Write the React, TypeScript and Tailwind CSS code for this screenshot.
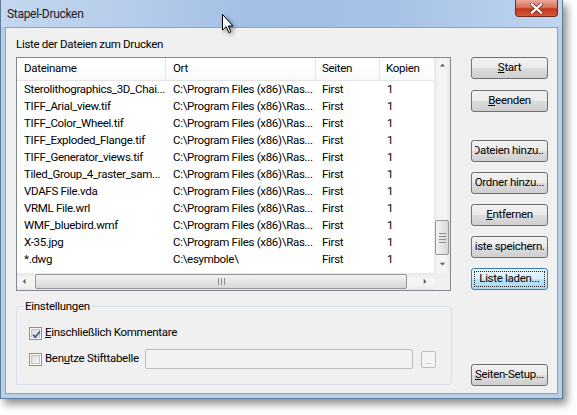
import React from 'react';

const rows: [string, string][] = [
  ['Sterolithographics_3D_Chai...', 'C:\\Program Files (x86)\\Ras...'],
  ['TIFF_Arial_view.tif', 'C:\\Program Files (x86)\\Ras...'],
  ['TIFF_Color_Wheel.tif', 'C:\\Program Files (x86)\\Ras...'],
  ['TIFF_Exploded_Flange.tif', 'C:\\Program Files (x86)\\Ras...'],
  ['TIFF_Generator_views.tif', 'C:\\Program Files (x86)\\Ras...'],
  ['Tiled_Group_4_raster_sam...', 'C:\\Program Files (x86)\\Ras...'],
  ['VDAFS File.vda', 'C:\\Program Files (x86)\\Ras...'],
  ['VRML File.wrl', 'C:\\Program Files (x86)\\Ras...'],
  ['WMF_bluebird.wmf', 'C:\\Program Files (x86)\\Ras...'],
  ['X-35.jpg', 'C:\\Program Files (x86)\\Ras...'],
  ['*.dwg', 'C:\\esymbole\\'],
];

// Win7 style push button
const Btn: React.FC<{ children: React.ReactNode; className?: string; focused?: boolean }> = ({
  children,
  className = '',
  focused,
}) => (
  <div
    className={`w-[77px] h-[22px] rounded-[3px] border p-[2px] ${
      focused
        ? 'border-[#3c7fb1] bg-[linear-gradient(#eaf6fd_0%,#d9f0fc_50%,#bee6fd_50%,#a7d9f5_100%)]'
        : 'border-[#707070] bg-[linear-gradient(#f2f2f2_0%,#ebebeb_50%,#dddddd_50%,#cfcfcf_100%)]'
    } ${className}`}
  >
    <div
      className={`w-full h-full flex items-center justify-center overflow-hidden whitespace-nowrap ${
        focused ? 'border border-dotted border-[#222]' : 'border border-transparent'
      }`}
    >
      {children}
    </div>
  </div>
);

const Checkbox: React.FC<{ checked?: boolean }> = ({ checked }) => (
  <div className="w-[13px] h-[13px] border border-[#8e8f8f] bg-white p-[1px] shrink-0">
    <div className="w-full h-full border border-[#c3c3c3] bg-[linear-gradient(135deg,#dcdcdc,#f8f8f8)] relative">
      {checked && (
        <svg viewBox="0 0 9 9" className="absolute left-0 top-0 w-[9px] h-[9px]">
          <path d="M1 4.5 L3.3 7 L8 1.2" fill="none" stroke="#3f5a8e" strokeWidth="1.8" />
        </svg>
      )}
    </div>
  </div>
);

const ArrowBtn: React.FC<{ dir: 'up' | 'down' | 'left' | 'right' }> = ({ dir }) => {
  const pts = {
    up: '2,5 5,2 8,5',
    down: '2,3 5,6 8,3',
    left: '5,2 2,5 5,8',
    right: '3,2 6,5 3,8',
  }[dir];
  return (
    <div className="w-[17px] h-[17px] flex items-center justify-center shrink-0">
      <svg viewBox="0 0 10 10" className="w-[9px] h-[9px]">
        <polygon points={pts} fill="#606060" />
      </svg>
    </div>
  );
};

export default function App() {
  return (
    <div
      className="w-[577px] h-[415px] bg-white relative overflow-hidden text-[11.5px] tracking-[-0.3px] text-black"
      style={{ fontFamily: 'Roboto, "Noto Sans", sans-serif' }}
    >
      <div className="w-[563px] h-[399px] flex flex-col border-x border-b border-[#5f7b9c] bg-[#b8cfea] shadow-[4px_5px_8px_rgba(0,0,0,0.45)]">
        {/* title bar */}
        <div className="h-[27px] flex items-start justify-between pl-[6px] pr-[4px] bg-[linear-gradient(90deg,#c4d7ee_0%,#b4cbea_25%,#a2bfe4_45%,#a6c2e6_70%,#c0d5ee_100%)]">
          <div className="h-[27px] flex items-center text-[12px] text-[#1a1a1a]">Stapel-Drucken</div>
          <div className="w-[43px] h-[17px] rounded-b-[4px] border border-t-0 border-[#6e2a1e] bg-[linear-gradient(#e9a898_0%,#d9745d_45%,#c2391f_55%,#d6563a_100%)] flex items-center justify-center">
            <svg viewBox="0 0 12 10" className="w-[13px] h-[11px]">
              <path d="M1.5 1 L10.5 9 M10.5 1 L1.5 9" stroke="#5a1a10" strokeWidth="3.2" strokeLinecap="round" />
              <path d="M1.5 1 L10.5 9 M10.5 1 L1.5 9" stroke="#ffffff" strokeWidth="2" strokeLinecap="round" />
            </svg>
          </div>
        </div>

        {/* frame + client */}
        <div className="flex-1 px-[4px] pb-[4px] flex">
          <div className="flex-1 border border-[#8ea3bb] bg-[#f0f0f0] flex pl-[10px] pt-[9px]">
            {/* left column */}
            <div className="w-[436px] flex flex-col">
              <div className="h-[15px] leading-[15px]">Liste der Dateien zum Drucken</div>
              <div className="mt-[5px] w-[435px] h-[234px] border border-[#828790] bg-white flex flex-col">
                <div className="flex flex-1 min-h-0">
                  <div className="flex-1 flex flex-col overflow-hidden">
                    <div className="h-[23px] flex border-b border-[#e5e5e5] bg-[linear-gradient(#ffffff,#fafafa)]">
                      <div className="w-[149px] pl-[7px] flex items-center border-r border-[#e5e5e5]">Dateiname</div>
                      <div className="w-[150px] pl-[7px] flex items-center border-r border-[#e5e5e5]">Ort</div>
                      <div className="w-[64px] pl-[6px] flex items-center border-r border-[#e5e5e5]">Seiten</div>
                      <div className="flex-1 pl-[6px] flex items-center">Kopien</div>
                    </div>
                    {rows.map(([name, path]) => (
                      <div key={name} className="h-[17px] leading-[17px] flex whitespace-nowrap">
                        <div className="w-[149px] pl-[7px] overflow-hidden">{name}</div>
                        <div className="w-[150px] pl-[7px] overflow-hidden">{path}</div>
                        <div className="w-[64px] pl-[6px]">First</div>
                        <div className="flex-1 pl-[7px]">1</div>
                      </div>
                    ))}
                  </div>
                  {/* vertical scrollbar */}
                  <div className="w-[16px] flex flex-col bg-[linear-gradient(90deg,#e8e8e8,#f5f5f5_30%,#f5f5f5_70%,#e8e8e8)]">
                    <ArrowBtn dir="up" />
                    <div className="flex-1 flex flex-col justify-end pb-[1px]">
                      <div className="mx-[1px] h-[35px] rounded-[2px] border border-[#979797] bg-[linear-gradient(90deg,#f2f2f2,#e6e6e6_50%,#d6d6d6)] flex flex-col items-center justify-center gap-[2px]">
                        <div className="w-[7px] h-[1px] bg-[#8d8d8d]" />
                        <div className="w-[7px] h-[1px] bg-[#8d8d8d]" />
                        <div className="w-[7px] h-[1px] bg-[#8d8d8d]" />
                        <div className="w-[7px] h-[1px] bg-[#8d8d8d]" />
                      </div>
                    </div>
                    <ArrowBtn dir="down" />
                  </div>
                </div>
                {/* horizontal scrollbar */}
                <div className="h-[17px] flex bg-[linear-gradient(#e8e8e8,#f5f5f5_30%,#f5f5f5_70%,#e8e8e8)]">
                  <ArrowBtn dir="left" />
                  <div className="flex-1 flex items-center">
                    <div className="ml-[1px] w-[372px] h-[15px] rounded-[2px] border border-[#979797] bg-[linear-gradient(#f2f2f2,#e6e6e6_50%,#d6d6d6)] flex items-center justify-center gap-[2px]">
                      <div className="w-[1px] h-[7px] bg-[#8d8d8d]" />
                      <div className="w-[1px] h-[7px] bg-[#8d8d8d]" />
                      <div className="w-[1px] h-[7px] bg-[#8d8d8d]" />
                    </div>
                  </div>
                  <ArrowBtn dir="right" />
                  <div className="w-[16px] bg-[#f0f0f0]" />
                </div>
              </div>

              {/* settings group */}
              <fieldset className="mt-[8px] w-[436px] border border-[#d5dfe5] rounded-[3px] pl-[6px] pb-[15px]">
                <legend className="px-[2px] leading-[15px] h-[15px]">Einstellungen</legend>
                <div className="pl-[6px]">
                  <div className="mt-[9px] h-[20px] flex items-center gap-[3px] whitespace-nowrap">
                    <Checkbox checked />
                    <span>
                      <span className="underline">E</span>inschließlich Kommentare
                    </span>
                  </div>
                  <div className="mt-[6px] h-[20px] flex items-center whitespace-nowrap">
                    <div className="w-[116px] shrink-0 flex items-center gap-[3px]">
                      <Checkbox />
                      <span>
                        Ben<span className="underline">u</span>tze Stifttabelle
                      </span>
                    </div>
                    <div className="w-[268px] h-[20px] rounded-[2px] border border-[#b9bdc1] bg-[#f2f2f2]" />
                    <div className="ml-[8px] w-[15px] h-[17px] rounded-[2px] border border-[#b9bdc1] bg-[#f4f4f4] flex items-end justify-center text-[9px] leading-[12px] text-[#9a9a9a]">
                      ...
                    </div>
                  </div>
                </div>
              </fieldset>
            </div>

            {/* right column */}
            <div className="ml-[19px] flex flex-col">
              <Btn className="mt-[20px]">
                <span className="underline">S</span>tart
              </Btn>
              <Btn className="mt-[11px]">
                <span className="underline">B</span>eenden
              </Btn>
              <Btn className="mt-[28px]">Dateien hinzu...</Btn>
              <Btn className="mt-[10px]">Ordner hinzu...</Btn>
              <Btn className="mt-[10px]">
                <span className="underline">E</span>ntfernen
              </Btn>
              <Btn className="mt-[10px]">
                <span className="underline">L</span>iste speichern...
              </Btn>
              <Btn className="mt-[10px]" focused>
                Liste laden...
              </Btn>
              <Btn className="mt-[74px]">
                <span className="underline">S</span>eiten-Setup...
              </Btn>
            </div>
          </div>
        </div>
      </div>

      {/* mouse cursor over the title bar */}
      <svg
        viewBox="0 0 12 20"
        className="absolute left-[222px] top-[14px] w-[12px] h-[20px] drop-shadow-[2px_2px_2px_rgba(0,0,0,0.4)]"
      >
        <path d="M0.5 0.5 L0.5 16 L4.2 12.6 L6.8 18.6 L8.8 17.8 L6.3 11.9 L11 11.9 Z" fill="#ffffff" stroke="#000000" strokeWidth="1" strokeLinejoin="round" />
      </svg>
    </div>
  );
}
